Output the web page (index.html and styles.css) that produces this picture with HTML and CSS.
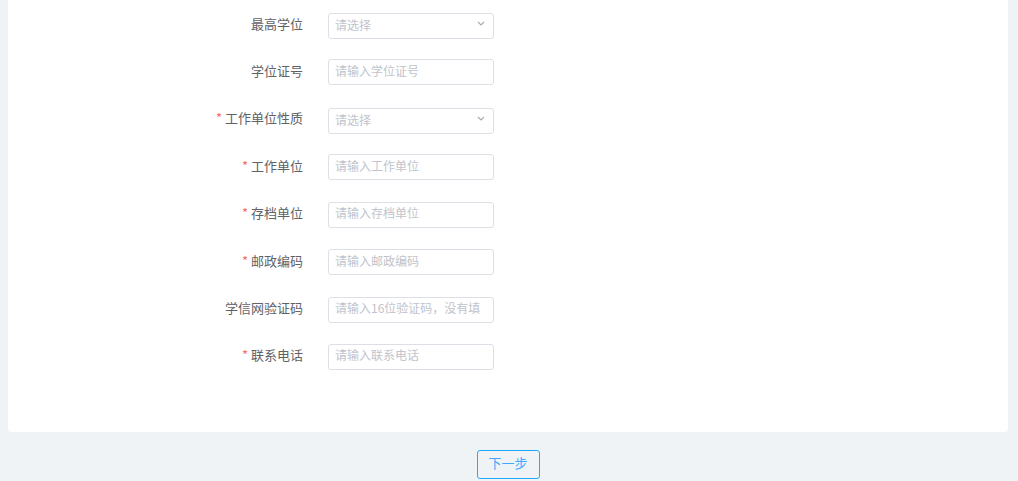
FILE: index.html
```html
<!DOCTYPE html>
<html lang="zh-CN">
<head>
    <meta charset="UTF-8">
    <meta name="viewport" content="width=device-width, initial-scale=1.0">
    <title>信息填写</title>
    <link rel="stylesheet" href="styles.css">
</head>
<body>

    <!-- 表单卡片 -->
    <div class="card">
        <form class="form">
            <div class="form-item">
                <label class="form-label">最高学位</label>
                <div class="select">
                    <input type="text" class="input" placeholder="请选择" readonly>
                    <svg class="arrow" width="8" height="5" viewBox="0 0 8 5"><path d="M1 1 L4 4 L7 1" fill="none" stroke="#a8abb2" stroke-width="1.2"/></svg>
                </div>
            </div>
            <div class="form-item">
                <label class="form-label">学位证号</label>
                <input type="text" class="input" placeholder="请输入学位证号">
            </div>
            <div class="form-item">
                <label class="form-label required">工作单位性质</label>
                <div class="select">
                    <input type="text" class="input" placeholder="请选择" readonly>
                    <svg class="arrow" width="8" height="5" viewBox="0 0 8 5"><path d="M1 1 L4 4 L7 1" fill="none" stroke="#a8abb2" stroke-width="1.2"/></svg>
                </div>
            </div>
            <div class="form-item">
                <label class="form-label required">工作单位</label>
                <input type="text" class="input" placeholder="请输入工作单位">
            </div>
            <div class="form-item">
                <label class="form-label required">存档单位</label>
                <input type="text" class="input" placeholder="请输入存档单位">
            </div>
            <div class="form-item">
                <label class="form-label required">邮政编码</label>
                <input type="text" class="input" placeholder="请输入邮政编码">
            </div>
            <div class="form-item">
                <label class="form-label">学信网验证码</label>
                <input type="text" class="input" placeholder="请输入16位验证码，没有填“无”">
            </div>
            <div class="form-item">
                <label class="form-label required">联系电话</label>
                <input type="text" class="input" placeholder="请输入联系电话">
            </div>
        </form>
    </div>

    <div class="footer">
        <button type="button" class="btn">下一步</button>
    </div>

</body>
</html>
```

FILE: styles.css
```css
body {
    font-family: "Noto Sans CJK SC", "Liberation Sans", sans-serif;
    background-color: #f0f3f6;
    margin: 0;
    padding: 0 10px 0 8px;
}
.card {
    background-color: #fff;
    border-radius: 0 0 4px 4px;
    padding: 12px 0 40.6px 0;
}
.form-item {
    display: flex;
    align-items: center;
    height: 26px;
    margin-bottom: 21.43px;
}
.form-label {
    width: 320px;
    padding-right: 25px;
    box-sizing: border-box;
    text-align: right;
    font-size: 13px;
    line-height: 20px;
    margin-top: -3px;
    color: #606266;
}
.required::before {
    content: "*";
    color: #f56c6c;
    margin-right: 3px;
}
.input {
    width: 166px;
    height: 26px;
    box-sizing: border-box;
    border: 1px solid #dcdfe6;
    border-radius: 3px;
    padding: 0 6px 4px 6px;
    font-size: 12px;
    font-family: inherit;
    color: #606266;
    outline: none;
}
.input::placeholder {
    color: #c0c4cc;
}
.select {
    position: relative;
}
.select .input {
    cursor: pointer;
}
.arrow {
    position: absolute;
    right: 9px;
    top: 10px;
}
.footer {
    display: flex;
    justify-content: center;
    padding-top: 18px;
}
.btn {
    width: 63px;
    height: 29px;
    background-color: transparent;
    border: 1px solid #1eaaff;
    border-radius: 3px;
    color: #40a9ff;
    font-size: 13px;
    font-family: inherit;
    cursor: pointer;
    padding: 0 0 3px 0;
}
```
